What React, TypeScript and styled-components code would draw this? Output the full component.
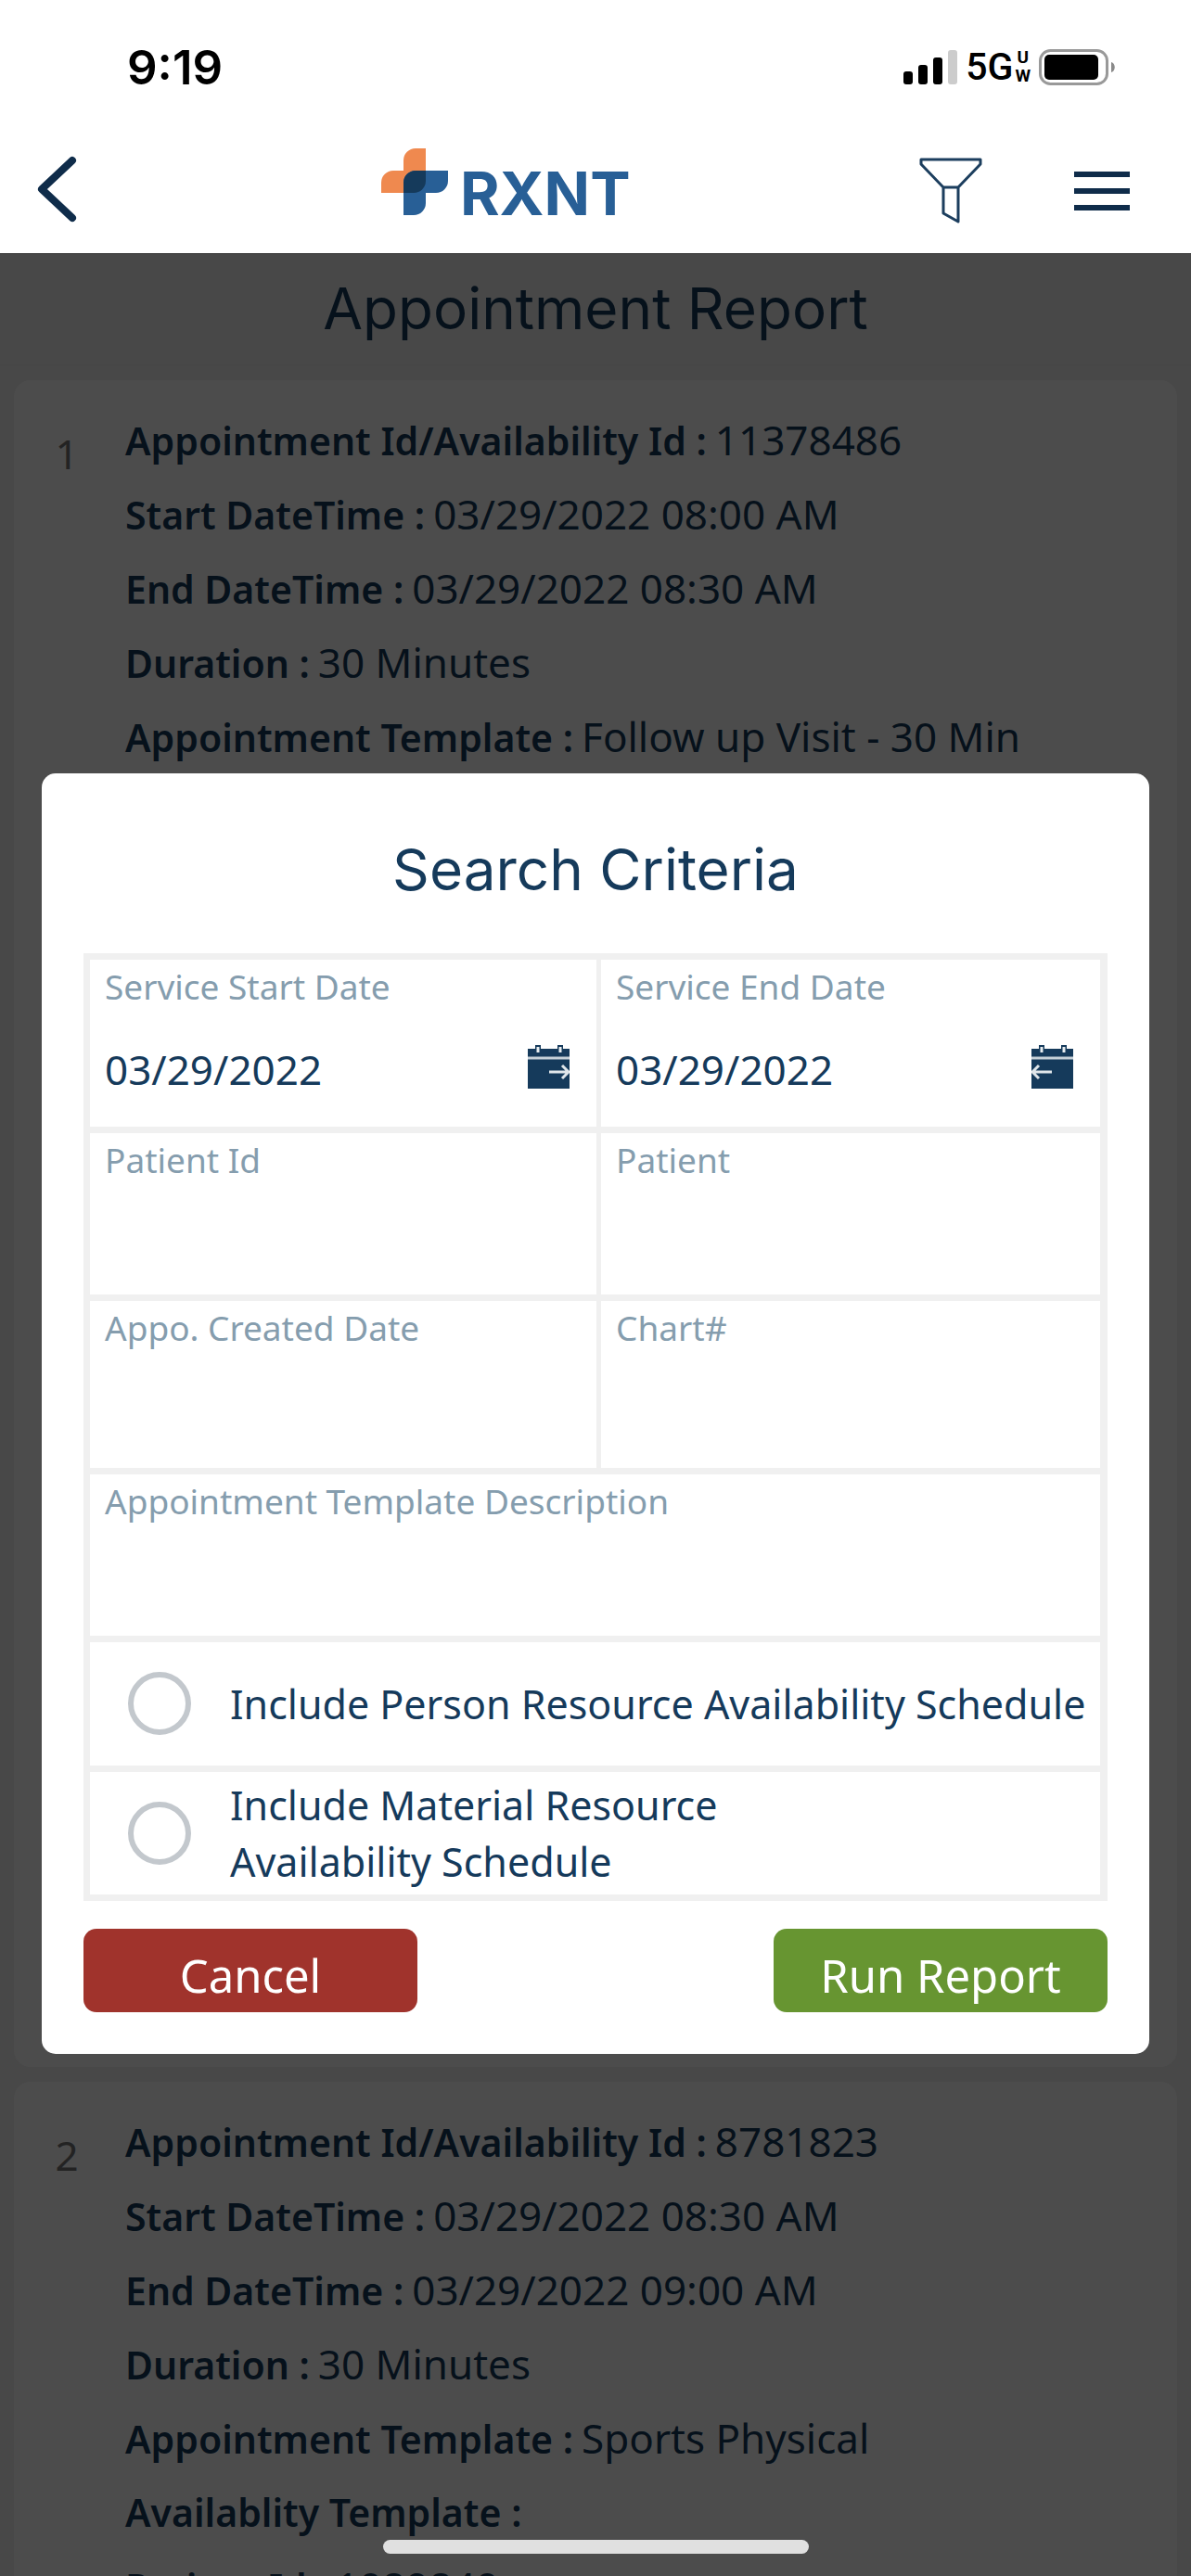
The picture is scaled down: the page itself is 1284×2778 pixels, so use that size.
import React from "react";
import styled, { createGlobalStyle } from "styled-components";

const GlobalStyle = createGlobalStyle`
  * { box-sizing: border-box; }
  body { margin: 0; font-family: "Noto Sans", "Open Sans", sans-serif; color: #153a5b; background: #f0f0f0; }
  h1, h2, p, dl, dd, dt, ol { margin: 0; padding: 0; }
  button, input { font: inherit; color: inherit; }
`;

const Screen = styled.div`
  display: flex;
  flex-direction: column;
  height: 100vh;
  overflow: hidden;
  position: relative;
`;

const TopArea = styled.header`
  background: #fff;
  color: #000;
  border-bottom: 1px solid #363636;
`;

const StatusBar = styled.div`
  display: flex;
  justify-content: space-between;
  align-items: center;
  height: 144px;
  padding: 0 82px 0 137px;
  font-family: Inter, sans-serif;
`;

const Clock = styled.span`
  font-size: 51px;
  font-weight: 600;
`;

const StatusIcons = styled.div`
  display: flex;
  align-items: center;
  gap: 9px;
`;

const Network = styled.span`
  display: flex;
  align-items: center;
  gap: 2px;
  font-size: 41px;
  line-height: 40px;
  font-family: Roboto, sans-serif;
  font-weight: 500;
`;

const NetworkMode = styled.span`
  display: flex;
  flex-direction: column;
  align-items: center;
  font-size: 19px;
  line-height: 20px;
  font-weight: 700;
`;

const NavBar = styled.nav`
  display: flex;
  align-items: center;
  height: 129px;
  padding: 0 66px 6px 34px;
`;

const NavSide = styled.div<{ $share: number; $end?: boolean }>`
  flex: ${(p) => p.$share} 1 0;
  display: flex;
  justify-content: ${(p) => (p.$end ? "flex-end" : "flex-start")};
`;

const NavActions = styled.div`
  display: flex;
  align-items: center;
  gap: 99px;
`;

const IconButton = styled.button`
  display: flex;
  padding: 0;
  border: 0;
  background: none;
`;

const Brand = styled.a`
  display: flex;
  align-items: baseline;
  gap: 13px;
  padding-bottom: 6px;
  color: #285f96;
  text-decoration: none;
  font: 700 65px/72px Inter, sans-serif;
`;

const Content = styled.main`
  flex: 1;
  min-height: 0;
  overflow: hidden;
  position: relative;
`;

const ReportTitle = styled.h1`
  padding: 23px 0;
  height: 120px;
  text-align: center;
  font: 400 62px/72px Inter, sans-serif;
  border-bottom: 1px solid #ebebeb;
`;

const Results = styled.ol`
  list-style: none;
  display: flex;
  flex-direction: column;
  gap: 16px;
  padding: 16px 15px;
`;

const ResultCard = styled.li`
  display: grid;
  grid-template-columns: 120px 1fr;
  min-height: 1819px;
  padding: 24px 16px 24px 0;
  border-radius: 18px;
  background: #fff;
`;

const ResultNumber = styled.span`
  padding: 15px 6px 0 0;
  text-align: center;
  font-size: 44px;
  line-height: 80px;
  color: #777;
`;

const FieldRow = styled.div`
  display: flex;
  align-items: baseline;
  gap: 9px;
  height: 80px;
  font-size: 44px;
  line-height: 80px;
  white-space: nowrap;
`;

const FieldName = styled.dt`
  font-size: 41px;
  font-weight: 600;
`;

const Backdrop = styled.div`
  position: absolute;
  inset: 0;
  display: flex;
  align-items: center;
  justify-content: center;
  padding: 0 45px 4px;
  background: rgba(0, 0, 0, 0.7);
`;

const Dialog = styled.form`
  width: 100%;
  padding: 64px 45px 45px;
  border-radius: 15px;
  background: #fff;
`;

const DialogTitle = styled.h2`
  padding-bottom: 50px;
  text-align: center;
  font: 400 62px/80px Inter, sans-serif;
`;

const Criteria = styled.div`
  display: grid;
  grid-template-columns: 546fr 538fr;
  grid-template-rows: 180px 174px 180px 174px 133px 132px;
  gap: 7px 5px;
  padding: 7px 8px 7px 7px;
  background: #f0f0f0;
`;

const Cell = styled.div<{ $wide?: boolean }>`
  display: flex;
  flex-direction: column;
  gap: 29px;
  min-width: 0;
  padding: 5px 29px 0 16px;
  background: #fff;
  ${(p) => p.$wide && "grid-column: 1 / -1;"}
`;

const CellLabel = styled.label`
  font-size: 37px;
  line-height: 48px;
  color: #859dae;
`;

const CellEntry = styled.div`
  display: flex;
  align-items: center;
  justify-content: space-between;
`;

const PickerButton = styled(IconButton)`
  padding-bottom: 4px;
`;

const TextBox = styled.input`
  flex: 1;
  min-width: 0;
  height: 72px;
  padding: 0;
  border: 0;
  outline: 0;
  background: none;
  font-size: 44px;
`;

const Option = styled.label`
  grid-column: 1 / -1;
  display: flex;
  align-items: center;
  gap: 42px;
  padding-left: 41px;
  background: #fff;
  font-size: 43px;
  line-height: 61px;
  white-space: nowrap;
`;

const RoundCheck = styled.input`
  appearance: none;
  flex: none;
  width: 68px;
  height: 68px;
  margin: 0;
  border: 6px solid #c3c8cd;
  border-radius: 50%;
  background: #fff;
`;

const Actions = styled.div`
  display: flex;
  justify-content: space-between;
  padding-top: 30px;
`;

const ActionButton = styled.button<{ $tone: string }>`
  width: 360px;
  height: 90px;
  padding: 10px 0 0;
  border: 0;
  border-radius: 14px;
  background: ${(p) => p.$tone};
  color: #fff;
  font-size: 49px;
  line-height: 80px;
`;

const HomeIndicator = styled.div`
  position: absolute;
  bottom: 24px;
  left: 50%;
  width: 459px;
  height: 15px;
  margin-left: -229px;
  border-radius: 8px;
  background: #e0e0e0;
`;

const SignalIcon = () => (
  <svg width="58" height="39" viewBox="0 0 58 39" aria-hidden="true">
    <rect x="0" y="24" width="10" height="14" rx="3" />
    <rect x="16" y="17" width="10" height="21" rx="3" />
    <rect x="32" y="9" width="10" height="29" rx="3" />
    <rect x="48" y="1" width="10" height="37" rx="3" fill="#ccc" />
  </svg>
);

const BatteryIcon = () => (
  <svg width="82" height="39" viewBox="0 0 82 39" aria-hidden="true">
    <rect x="1.5" y="1.5" width="72" height="36" rx="11" fill="none" stroke="#999" strokeWidth="3" />
    <rect x="6" y="6" width="58" height="27" rx="5" />
    <path d="M78 14c5 1 5 10 0 11z" fill="#8a8a8a" />
  </svg>
);

const BackIcon = () => (
  <svg width="54" height="76" viewBox="0 0 54 76" aria-hidden="true">
    <path d="M44 5 11 36l33 31" fill="none" stroke="#0f2c4a" strokeWidth="8" strokeLinecap="round" strokeLinejoin="round" />
  </svg>
);

const BrandMark = () => (
  <svg width="72" height="72" viewBox="0 0 72 72" aria-hidden="true">
    <path d="M24 24V13A13 13 0 0 1 37 0h11v35a13 13 0 0 1-13 13H0V37a13 13 0 0 1 13-13z" fill="#ef894f" />
    <path d="M24 72V37a13 13 0 0 1 13-13h35v11a13 13 0 0 1-13 13H48v11a13 13 0 0 1-13 13z" fill="#285f96" />
    <path d="M24 48V37a13 13 0 0 1 13-13h11v11a13 13 0 0 1-13 13z" fill="#153a5b" />
  </svg>
);

const FilterIcon = () => (
  <svg width="68" height="72" viewBox="0 0 68 72" aria-hidden="true">
    <path d="M2 2h64v5L42 32v37L26 60V32L2 7zM26 32h16" fill="none" stroke="#1c3e5e" strokeWidth="3" strokeLinejoin="round" />
  </svg>
);

const MenuIcon = () => (
  <svg width="60" height="42" viewBox="0 0 60 42" aria-hidden="true">
    <path d="M0 3h60M0 21h60M0 39h60" stroke="#0f2c4a" strokeWidth="6" />
  </svg>
);

const CalendarIcon = ({ back }: { back?: boolean }) => (
  <svg width="45" height="47" viewBox="0 0 45 47" aria-hidden="true">
    <path d="M0 4h8V0h6v4h18V0h6v4h7v43H0z" fill="#153a5b" />
    <path d="M0 14h45" stroke="#c5d0d8" strokeWidth="3" />
    <path d="M11 2v6M35 2v6" stroke="#e8edf0" strokeWidth="3" />
    <path
      d={back ? "M22 29H1M8 22 1 29l7 7" : "M23 29h21M37 22l7 7-7 7"}
      fill="none"
      stroke="#e0e6ea"
      strokeWidth="3"
    />
  </svg>
);

const appointments = [
  {
    fields: [
      ["Appointment Id/Availability Id :", "11378486"],
      ["Start DateTime :", "03/29/2022 08:00 AM"],
      ["End DateTime :", "03/29/2022 08:30 AM"],
      ["Duration :", "30 Minutes"],
      ["Appointment Template :", "Follow up Visit - 30 Min"],
    ],
  },
  {
    fields: [
      ["Appointment Id/Availability Id :", "8781823"],
      ["Start DateTime :", "03/29/2022 08:30 AM"],
      ["End DateTime :", "03/29/2022 09:00 AM"],
      ["Duration :", "30 Minutes"],
      ["Appointment Template :", "Sports Physical"],
      ["Availablity Template :", ""],
      ["Patient Id :", "1089840"],
    ],
  },
];

type CriterionProps = { id: string; label: string; value?: string; wide?: boolean; icon?: React.ReactNode };

const Criterion = ({ id, label, value = "", wide, icon }: CriterionProps) => (
  <Cell $wide={wide}>
    <CellLabel htmlFor={id}>{label}</CellLabel>
    <CellEntry>
      <TextBox id={id} type="text" defaultValue={value} />
      {icon && (
        <PickerButton type="button" aria-label={`Pick ${label}`}>
          {icon}
        </PickerButton>
      )}
    </CellEntry>
  </Cell>
);

export default function App() {
  return (
    <Screen>
      <GlobalStyle />
      <TopArea>
        <StatusBar>
          <Clock>9:19</Clock>
          <StatusIcons>
            <SignalIcon />
            <Network>
              5G
              <NetworkMode>
                <span>U</span>
                <span>W</span>
              </NetworkMode>
            </Network>
            <BatteryIcon />
          </StatusIcons>
        </StatusBar>
        <NavBar>
          <NavSide $share={7}>
            <IconButton type="button" aria-label="Back">
              <BackIcon />
            </IconButton>
          </NavSide>
          <Brand href="#">
            <BrandMark />
            RXNT
          </Brand>
          <NavSide $share={10} $end>
            <NavActions>
              <IconButton type="button" aria-label="Filter">
                <FilterIcon />
              </IconButton>
              <IconButton type="button" aria-label="Menu">
                <MenuIcon />
              </IconButton>
            </NavActions>
          </NavSide>
        </NavBar>
      </TopArea>
      <Content>
        <ReportTitle>Appointment Report</ReportTitle>
        <Results>
          {appointments.map((appointment, index) => (
            <ResultCard key={index}>
              <ResultNumber>{index + 1}</ResultNumber>
              <dl>
                {appointment.fields.map(([name, value]) => (
                  <FieldRow key={name}>
                    <FieldName>{name}</FieldName>
                    <dd>{value}</dd>
                  </FieldRow>
                ))}
              </dl>
            </ResultCard>
          ))}
        </Results>
        <Backdrop>
          <Dialog role="dialog" aria-labelledby="search-title" onSubmit={(e) => e.preventDefault()}>
            <DialogTitle id="search-title">Search Criteria</DialogTitle>
            <Criteria>
              <Criterion id="start" label="Service Start Date" value="03/29/2022" icon={<CalendarIcon />} />
              <Criterion id="end" label="Service End Date" value="03/29/2022" icon={<CalendarIcon back />} />
              <Criterion id="patient-id" label="Patient Id" />
              <Criterion id="patient" label="Patient" />
              <Criterion id="created" label="Appo. Created Date" />
              <Criterion id="chart" label="Chart#" />
              <Criterion id="template" label="Appointment Template Description" wide />
              <Option>
                <RoundCheck type="checkbox" />
                <span>Include Person Resource Availability Schedule</span>
              </Option>
              <Option>
                <RoundCheck type="checkbox" />
                <span>
                  Include Material Resource
                  <br />
                  Availability Schedule
                </span>
              </Option>
            </Criteria>
            <Actions>
              <ActionButton type="button" $tone="#a0332c">
                Cancel
              </ActionButton>
              <ActionButton type="submit" $tone="#679531">
                Run Report
              </ActionButton>
            </Actions>
          </Dialog>
        </Backdrop>
      </Content>
      <HomeIndicator />
    </Screen>
  );
}
